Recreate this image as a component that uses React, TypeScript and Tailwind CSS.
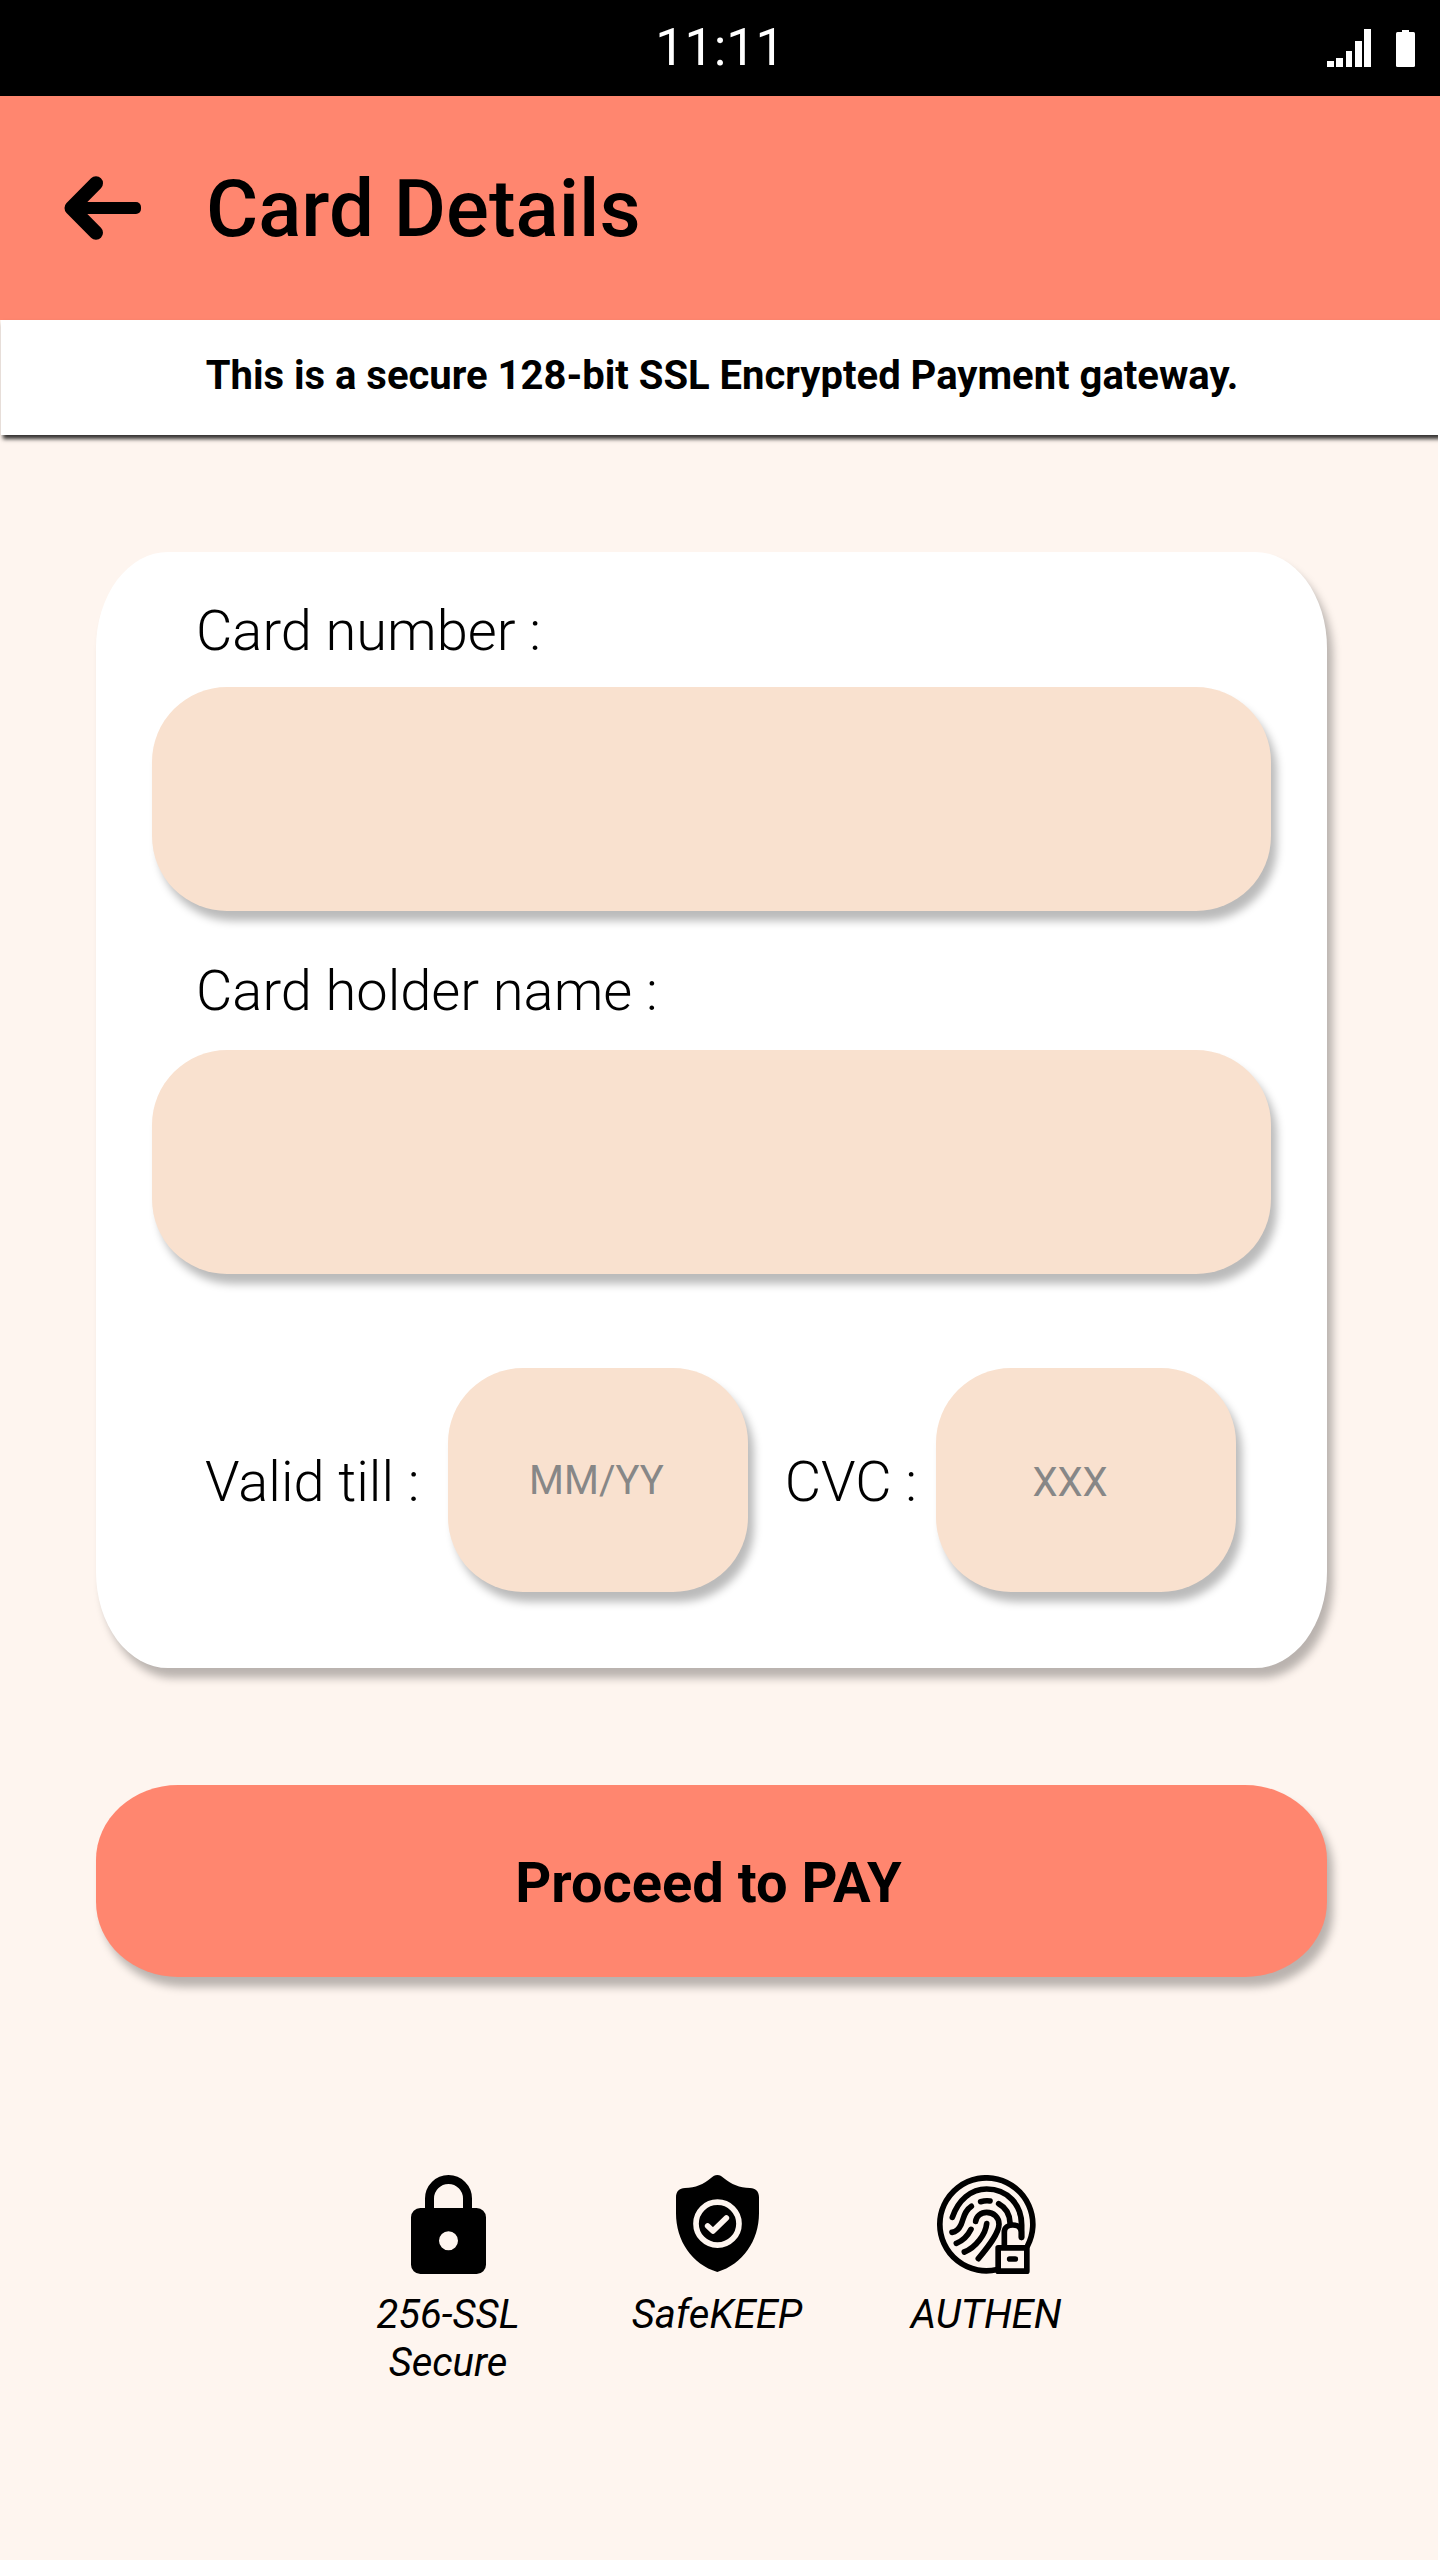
import React from "react";

const softShadow = "shadow-[6px_10px_9px_rgba(0,0,0,0.27)]";
const fieldBox =
  "h-[224px] rounded-[75px] border-0 bg-[#f9e1cf] text-[40px] font-normal text-black outline-none placeholder:text-[#878787] placeholder:opacity-100";
const labelText = "text-[56px] leading-[64px] font-light";

function SignalIcon() {
  return (
    <svg className="h-[38px] w-[44px]" viewBox="0 0 44 38" fill="currentColor" aria-hidden="true">
      <rect x="0" y="32" width="7" height="6" />
      <rect x="9" y="29" width="7" height="9" />
      <rect x="19" y="22" width="6" height="16" />
      <rect x="28" y="12" width="7" height="26" />
      <rect x="37" y="0" width="7" height="38" />
    </svg>
  );
}

function BatteryIcon() {
  return (
    <svg className="h-[37px] w-[19px]" viewBox="0 0 19 37" fill="currentColor" aria-hidden="true">
      <rect x="6" y="0" width="7" height="5" />
      <rect x="0" y="2" width="19" height="35" rx="1.5" />
    </svg>
  );
}

function BackArrow() {
  return (
    <svg className="h-[64px] w-[77px]" viewBox="0 0 77 64" fill="none" aria-hidden="true">
      <path
        d="M32 7.3 L7.5 32 L32 56.7"
        stroke="currentColor"
        strokeWidth="14"
        strokeLinecap="round"
        strokeLinejoin="round"
      />
      <rect x="10" y="26" width="67" height="12" rx="5" fill="currentColor" />
    </svg>
  );
}

function LockIcon() {
  return (
    <svg className="h-[99px] w-[75px]" viewBox="150 75 225 297" aria-hidden="true">
      <path
        fill="currentColor"
        fillRule="evenodd"
        d="M178 174 H347 A28 28 0 0 1 375 202 V344 A28 28 0 0 1 347 372 H178 A28 28 0 0 1 150 344 V202 A28 28 0 0 1 178 174 Z M262.5 244 A28.5 28.5 0 1 0 262.5 301 A28.5 28.5 0 1 0 262.5 244 Z"
      />
      <path
        d="M205.5 182 V145.5 A57 57 0 0 1 319.5 145.5 V182"
        fill="none"
        stroke="currentColor"
        strokeWidth="27"
      />
    </svg>
  );
}

function ShieldIcon() {
  return (
    <svg className="h-[97px] w-[83px]" viewBox="168 75 249 291" fill="none" aria-hidden="true">
      <path
        fill="currentColor"
        d="M292 75 C300 75 304 78 311 84 C335 104 358 113 390 114 C407 115 417 124 417 142 V190 C417 272 368 344 292 366 C216 344 168 272 168 190 V142 C168 124 178 115 195 114 C227 113 250 104 273 84 C280 78 284 75 292 75 Z"
      />
      <circle cx="292.5" cy="221" r="64.5" stroke="#fef5ef" strokeWidth="17" />
      <path
        d="M263 228 L279 243 L319 204"
        stroke="#fef5ef"
        strokeWidth="17"
        strokeLinecap="round"
        strokeLinejoin="round"
      />
    </svg>
  );
}

function FingerprintIcon() {
  return (
    <svg
      className="h-[99px] w-[99px]"
      viewBox="108 75 297 297"
      fill="none"
      stroke="currentColor"
      strokeWidth="17"
      strokeLinecap="round"
      aria-hidden="true"
    >
      <path d="M289 358.5 A139.5 139.5 0 1 1 379.4 288" />
      <path d="M154 202 C172 150 210 117 257 117 C320 117 362 165 362 225 V262" />
      <path d="M239 155 Q254 151 267 153" />
      <path d="M293 161 C315 173 326 193 327 218" />
      <path d="M211 169 C188 184 189 205 180 224 C173 239 166 245 153 247" />
      <path d="M224 214 C226 198 240 187 257 187 C278 187 294 202 294 223 C294 250 262 290 232 326" />
      <path d="M257 221 C254 252 225 292 190 306" />
      <path d="M210 238 C200 258 185 273 166 280" />
      <path d="M310 288 V246 C310 218 361 218 361 246 V262" />
      <rect x="291.5" y="293.5" width="86" height="70" strokeLinejoin="round" />
      <path d="M326 327 H343" />
    </svg>
  );
}

function TrustBadge({ icon, children }: { icon: React.ReactNode; children: React.ReactNode }) {
  return (
    <li className="flex w-[176px] flex-col items-center">
      <div className="flex h-[99px] items-start">{icon}</div>
      <span className="mt-[17px] text-center text-[40px] leading-[48px] italic">{children}</span>
    </li>
  );
}

export default function App() {
  return (
    <div className="flex min-h-screen flex-col bg-[#fef5ef] font-['Roboto',sans-serif] text-black">
      <div className="grid h-24 grid-cols-3 items-center bg-black text-white">
        <span className="col-start-2 text-center text-[52px] leading-[60px] font-normal">11:11</span>
        <div className="flex items-center justify-end gap-[25px] pr-[25px]">
          <SignalIcon />
          <BatteryIcon />
        </div>
      </div>

      <header className="flex h-56 items-center gap-[65px] bg-[#ff866f] px-16">
        <button type="button" aria-label="Back">
          <BackArrow />
        </button>
        <h1 className="pt-0.5 text-[80px] leading-[96px] font-medium">Card Details</h1>
      </header>

      <p className="ml-px bg-white pt-[30px] pb-[34px] pl-[3px] text-center text-[40px] leading-[51px] font-bold shadow-[2px_4px_4px_rgba(0,0,0,0.8)]">
        This is a secure 128-bit SSL Encrypted Payment gateway.
      </p>

      <main className="border-r-2 border-white pr-[111px] pl-24">
        <form onSubmit={(e) => e.preventDefault()}>
          <div className={`mt-[117px] flex flex-col rounded-[72px/96px] bg-white px-14 pt-[47px] pb-[76px] ${softShadow}`}>
            <label htmlFor="number" className={`ml-11 ${labelText}`}>
              Card number :
            </label>
            <input id="number" type="text" className={`mt-6 px-12 ${fieldBox} ${softShadow}`} />

            <label htmlFor="holder" className={`mt-12 ml-11 ${labelText}`}>
              Card holder name :
            </label>
            <input id="holder" type="text" className={`mt-[27px] px-12 ${fieldBox} ${softShadow}`} />

            <div className="mt-[94px] mr-[35px] ml-[53px] flex items-center justify-between">
              <div className="flex items-center gap-[29px]">
                <label htmlFor="expiry" className={`pt-1 ${labelText}`}>
                  Valid till :
                </label>
                <input
                  id="expiry"
                  type="text"
                  placeholder="MM/YY"
                  className={`w-[300px] pr-1 text-center ${fieldBox} ${softShadow}`}
                />
              </div>
              <div className="flex items-center gap-[19px]">
                <label htmlFor="cvc" className={`pt-1 ${labelText}`}>
                  CVC :
                </label>
                <input
                  id="cvc"
                  type="text"
                  placeholder="XXX"
                  className={`w-[300px] pt-1 pr-8 text-center ${fieldBox} ${softShadow}`}
                />
              </div>
            </div>
          </div>

          <button
            type="submit"
            className={`mt-[117px] h-48 w-full rounded-[82px/75px] bg-[#ff866f] pt-1 pr-1.5 text-[56px] font-bold ${softShadow}`}
          >
            Proceed to PAY
          </button>
        </form>
      </main>

      <ul className="flex grow justify-center gap-[93px] border-r-2 border-white pt-[198px] pr-1 pb-16">
        <TrustBadge icon={<LockIcon />}>256-SSL Secure</TrustBadge>
        <TrustBadge icon={<ShieldIcon />}>SafeKEEP</TrustBadge>
        <TrustBadge icon={<FingerprintIcon />}>AUTHEN</TrustBadge>
      </ul>
    </div>
  );
}
